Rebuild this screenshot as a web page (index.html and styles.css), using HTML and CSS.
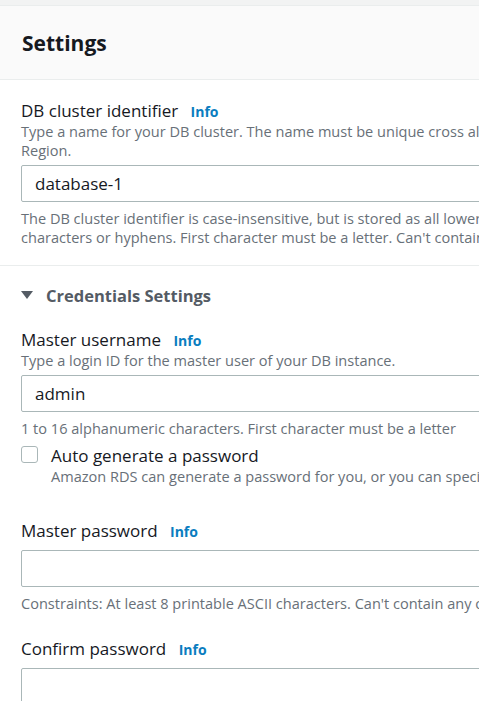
FILE: index.html
```html
<!DOCTYPE html>
<html lang="en">
<head>
<meta charset="utf-8">
<title>Settings</title>
<link rel="stylesheet" href="styles.css">
</head>
<body>
<div class="topbar"></div>
<div class="panel">
  <div class="panel-header"><h2 class="panel-title">Settings</h2></div>
  <div class="section section-first">
    <div class="field">
      <div class="label">DB cluster identifier <a class="info">Info</a></div>
      <div class="desc">Type a name for your DB cluster. The name must be unique cross all DB clusters owned by your AWS account in the current AWS<br>Region.</div>
      <div class="input">database-1</div>
      <div class="help">The DB cluster identifier is case-insensitive, but is stored as all lowercase (as in "mydbcluster"). Constraints: 1 to 60 alphanumeric<br>characters or hyphens. First character must be a letter. Can't contain two consecutive hyphens. Can't end with a hyphen.</div>
    </div>
  </div>
  <div class="section section-creds">
    <div class="expander"><span class="caret"></span><span class="expander-title">Credentials Settings</span></div>
    <div class="field field-user">
      <div class="label">Master username <a class="info">Info</a></div>
      <div class="desc">Type a login ID for the master user of your DB instance.</div>
      <div class="input">admin</div>
      <div class="help">1 to 16 alphanumeric characters. First character must be a letter</div>
    </div>
    <div class="check-row">
      <span class="checkbox"></span>
      <div class="check-text">
        <div class="check-label">Auto generate a password</div>
        <div class="check-desc">Amazon RDS can generate a password for you, or you can specify your own password</div>
      </div>
    </div>
    <div class="field field-pw">
      <div class="label">Master password <a class="info">Info</a></div>
      <div class="input"></div>
      <div class="help">Constraints: At least 8 printable ASCII characters. Can't contain any of the following: / (slash), '(single quote), "(double quote) and @ (at sign).</div>
    </div>
    <div class="field field-confirm">
      <div class="label">Confirm password <a class="info">Info</a></div>
      <div class="input"></div>
    </div>
  </div>
</div>
</body>
</html>
```
FILE: styles.css
```css
html, body {
  margin: 0;
  padding: 0;
  overflow: hidden;
  background: #ffffff;
}
body {
  font-family: "Open Sans", "Noto Sans", sans-serif;
  color: #16191f;
  width: 479px;
  height: 701px;
}
.topbar {
  height: 5px;
  background: #f2f3f3;
  border-bottom: 1px solid #eaeded;
}
.panel {
  width: 1100px;
}
.panel-header {
  background: #fafafa;
  border-bottom: 1px solid #eaeded;
  height: 73px;
  display: flex;
  align-items: center;
  padding: 0 22px;
}
.panel-title {
  margin: 0;
  font-size: 21px;
  font-weight: 700;
  line-height: 24px;
  color: #16191f;
}
.section {
  padding: 0 21px;
}
.section-first {
  padding-top: 21px;
  padding-bottom: 18px;
  border-bottom: 1px solid #eaeded;
}
.label {
  font-size: 17px;
  line-height: 20px;
  white-space: nowrap;
}
.info {
  color: #0a7dbf;
  font-weight: 700;
  font-size: 14px;
  margin-left: 8px;
}
.desc, .help, .check-desc {
  font-size: 14.55px;
  line-height: 19px;
  color: #687078;
  white-space: nowrap;
}
.input {
  margin-top: 5px;
  height: 35px;
  border: 1px solid #aab7b8;
  border-radius: 2px;
  font-size: 17px;
  line-height: 35px;
  padding: 0 13px;
  color: #16191f;
}
.help {
  margin-top: 7px;
}
.expander {
  display: flex;
  align-items: center;
  height: 20px;
  margin-top: 19px;
}
.caret {
  width: 0;
  height: 0;
  border-left: 6px solid transparent;
  border-right: 6px solid transparent;
  border-top: 8px solid #545b64;
  margin-right: 13px;
}
.expander-title {
  font-size: 16.5px;
  font-weight: 700;
  color: #545b64;
}
.field-user {
  margin-top: 25px;
}
.check-row {
  display: flex;
  margin-top: 8px;
}
.checkbox {
  width: 15px;
  height: 15px;
  border: 1px solid #aab7b8;
  border-radius: 3px;
  flex: none;
}
.check-text {
  margin-left: 13px;
}
.check-label {
  font-size: 17px;
  line-height: 20px;
}
.check-desc {
  line-height: 21px;
}
.field-pw {
  margin-top: 34px;
}
.field-pw .input {
  margin-top: 8px;
}
.field-confirm {
  margin-top: 26px;
}
.field-confirm .input {
  margin-top: 8px;
}
```
